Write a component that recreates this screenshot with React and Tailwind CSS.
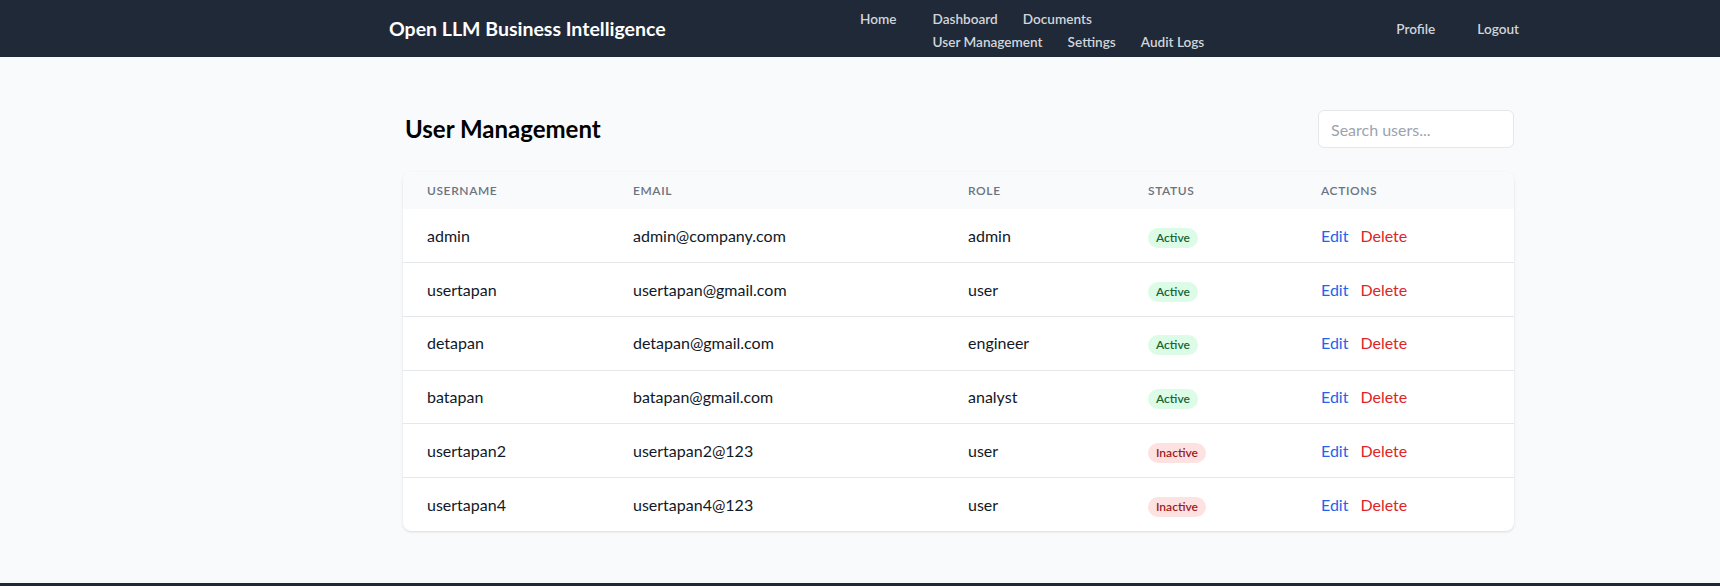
import React from 'react'

const users = [
  { username: 'admin', email: 'admin@company.com', role: 'admin', active: true },
  { username: 'usertapan', email: 'usertapan@gmail.com', role: 'user', active: true },
  { username: 'detapan', email: 'detapan@gmail.com', role: 'engineer', active: true },
  { username: 'batapan', email: 'batapan@gmail.com', role: 'analyst', active: true },
  { username: 'usertapan2', email: 'usertapan2@123', role: 'user', active: false },
  { username: 'usertapan4', email: 'usertapan4@123', role: 'user', active: false },
]

const NavLink = ({ children }) => (
  <a href="#" className="block text-[13.6px] font-semibold leading-5 text-[#d1d5db] hover:text-white">
    {children}
  </a>
)

const StatusBadge = ({ active }) =>
  active ? (
    <span className="inline-flex h-5 items-center rounded-full bg-[#dcfce7] px-2 text-xs font-semibold text-[#166534]">
      Active
    </span>
  ) : (
    <span className="inline-flex h-5 items-center rounded-full bg-[#fee2e2] px-2 text-xs font-semibold text-[#991b1b]">
      Inactive
    </span>
  )

export default function App() {
  return (
    <div className="min-h-screen bg-[#f9fafb] font-['Lato','Noto_Sans',sans-serif] text-[#111827]">
      {/* Top navigation */}
      <header className="h-[57px] bg-[#1f2937]">
        <div className="ml-[389px] flex h-full w-[1130px] items-stretch">
          <div className="flex w-[471px] items-center">
            <span className="text-[19.5px] font-bold text-white">Open LLM Business Intelligence</span>
          </div>
          <nav className="flex items-start pt-[9px]">
            <div className="mr-[36px]">
              <NavLink>Home</NavLink>
            </div>
            <div className="flex flex-col gap-[3px]">
              <div className="flex gap-[25px]">
                <NavLink>Dashboard</NavLink>
                <NavLink>Documents</NavLink>
              </div>
              <div className="flex gap-[25px]">
                <NavLink>User Management</NavLink>
                <NavLink>Settings</NavLink>
                <NavLink>Audit Logs</NavLink>
              </div>
            </div>
          </nav>
          <div className="ml-auto flex items-center gap-[42px] pt-[1px]">
            <NavLink>Profile</NavLink>
            <NavLink>Logout</NavLink>
          </div>
        </div>
      </header>

      {/* Main */}
      <main className="ml-[403px] w-[1111px] pt-[53px] pb-[52px]">
        <div className="mb-6 flex items-center justify-between">
          <h1 className="pl-[2px] text-2xl font-bold text-black">User Management</h1>
          <input
            type="text"
            placeholder="Search users..."
            className="h-[38px] w-[196px] rounded-md border border-[#e5e7eb] bg-white px-3 text-base outline-none placeholder:text-[#9ca3af]"
          />
        </div>

        <div className="overflow-hidden rounded-lg bg-white shadow">
          <table className="w-full table-fixed">
            <thead className="bg-[#f9fafb]">
              <tr className="h-[37px] text-left text-xs uppercase tracking-wider text-[#6b7280]">
                <th className="w-[206px] px-6 font-semibold">Username</th>
                <th className="w-[335px] px-6 font-semibold">Email</th>
                <th className="w-[180px] px-6 font-semibold">Role</th>
                <th className="w-[173px] px-6 font-semibold">Status</th>
                <th className="px-6 font-semibold">Actions</th>
              </tr>
            </thead>
            <tbody>
              {users.map((u, i) => (
                <tr key={u.username} className={`h-[53.7px] ${i > 0 ? 'border-t border-[#e5e7eb]' : ''}`}>
                  <td className="px-6 text-base">{u.username}</td>
                  <td className="px-6 text-base">{u.email}</td>
                  <td className="px-6 text-base">{u.role}</td>
                  <td className="px-6">
                    <StatusBadge active={u.active} />
                  </td>
                  <td className="px-6 text-base">
                    <button className="mr-3 text-[#2563eb] hover:text-[#1e40af]">Edit</button>
                    <button className="text-[#dc2626] hover:text-[#991b1b]">Delete</button>
                  </td>
                </tr>
              ))}
            </tbody>
          </table>
        </div>
      </main>

      <footer className="h-16 bg-[#1f2937]" />
    </div>
  )
}
